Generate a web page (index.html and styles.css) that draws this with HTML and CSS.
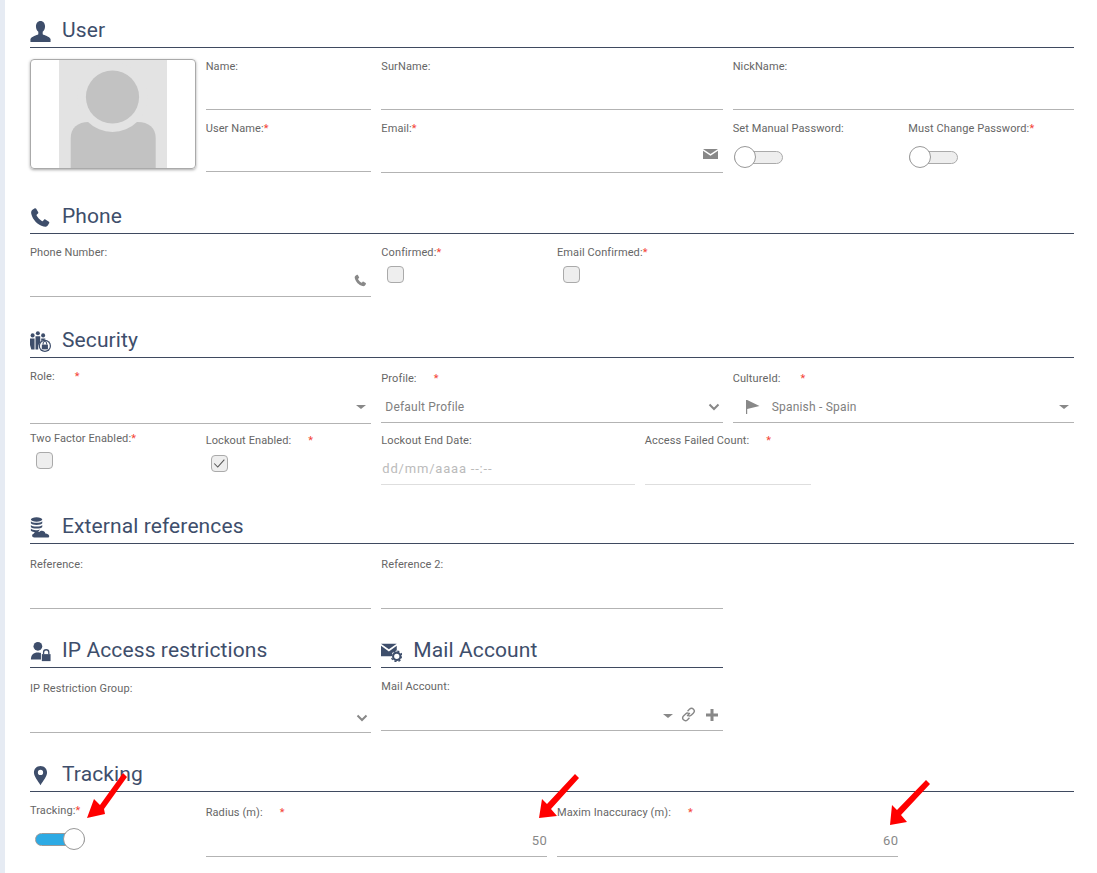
FILE: index.html
```html
<!DOCTYPE html>
<html lang="en">
<head>
    <meta charset="UTF-8">
    <title>User</title>
    <link rel="stylesheet" href="styles.css">
</head>
<body>
<div class="page">

    <!-- User -->
    <section class="section section-first">
        <h2 class="section-head">
            <svg class="head-icon" viewBox="0 0 24 24"><path d="M12 0C9 0 6.800 2.500 6.800 6c0 2.700 1 4.800 2.700 6.300V15C8 16.200 1.500 17.500.5 20.500V24h23v-3.500c-1-3-7.500-4.300-9-5.500v-2.700C16.200 10.800 17.200 8.700 17.200 6 17.200 2.500 15 0 12 0z"/></svg>
            User
        </h2>
        <div class="form-grid">
            <div class="avatar span-2">
                <svg class="avatar-img" viewBox="0 0 108 108">
                    <rect width="108" height="108" fill="#e3e3e3"/>
                    <path d="M11.700 108V78c0-10 7-16 18-16h49c11 0 18 6 18 16v30z" fill="#c2c2c2"/>
                    <circle cx="53.500" cy="37" r="35" fill="#e3e3e3"/>
                    <circle cx="53.500" cy="37" r="26.600" fill="#c2c2c2"/>
                </svg>
            </div>
            <div class="field span-2">
                <label>Name:</label>
                <div class="control"><input type="text"></div>
            </div>
            <div class="field span-4">
                <label>SurName:</label>
                <div class="control"><input type="text"></div>
            </div>
            <div class="field span-4">
                <label>NickName:</label>
                <div class="control"><input type="text"></div>
            </div>
            <div class="field span-2">
                <label>User Name:<span class="req">*</span></label>
                <div class="control"><input type="text"></div>
            </div>
            <div class="field span-4">
                <label>Email:<span class="req">*</span></label>
                <div class="control control-icon">
                    <input type="text">
                    <svg class="mini-icon icon-mail" viewBox="0 0 15 10"><path d="M0 0h15L7.500 5zM0 1.800l7.500 5 7.500-5V10H0z"/></svg>
                </div>
            </div>
            <div class="field span-2">
                <label>Set Manual Password:</label>
                <span class="switch"><span class="knob"></span></span>
            </div>
            <div class="field span-2">
                <label>Must Change Password:<span class="req">*</span></label>
                <span class="switch"><span class="knob"></span></span>
            </div>
        </div>
    </section>

    <!-- Phone -->
    <section class="section section-wide">
        <h2 class="section-head">
            <svg class="head-icon" viewBox="0 0 24 24"><path d="M5.500 1.500 2.800 3.200C1.500 4.200 1 6 1.500 8c1.500 6.500 7.500 12.800 14 14.300 2 .4 3.700 0 4.800-1.300l1.700-2.600c.3-.6.1-1.200-.4-1.600l-4-2.600c-.6-.3-1.200-.2-1.600.3l-1.500 1.700c-2.500-.8-6.300-4.800-7.200-7.200l1.800-1.500c.5-.4.6-1 .3-1.600L7.100 1.900c-.4-.5-1-.7-1.600-.4z"/></svg>
            Phone
        </h2>
        <div class="form-grid">
            <div class="field span-4">
                <label>Phone Number:</label>
                <div class="control control-icon">
                    <input type="text">
                    <svg class="mini-icon icon-phone" viewBox="0 0 24 24"><path d="M5.500 1.500 2.800 3.200C1.500 4.200 1 6 1.500 8c1.500 6.500 7.500 12.800 14 14.300 2 .4 3.700 0 4.800-1.300l1.700-2.600c.3-.6.1-1.200-.4-1.600l-4-2.600c-.6-.3-1.200-.2-1.600.3l-1.500 1.700c-2.500-.8-6.300-4.800-7.200-7.200l1.800-1.500c.5-.4.6-1 .3-1.600L7.100 1.900c-.4-.5-1-.7-1.600-.4z"/></svg>
                </div>
            </div>
            <div class="field span-2">
                <label>Confirmed:<span class="req">*</span></label>
                <span class="check"></span>
            </div>
            <div class="field span-2">
                <label>Email Confirmed:<span class="req">*</span></label>
                <span class="check"></span>
            </div>
        </div>
    </section>

    <!-- Security -->
    <section class="section section-wide">
        <h2 class="section-head">
            <svg class="head-icon" viewBox="0 0 24 24">
                <circle cx="3" cy="5" r="2.300"/>
                <circle cx="9" cy="2.600" r="2.300"/>
                <circle cx="15" cy="5" r="2.300"/>
                <path d="M0 8.500h5.200V21H1.500L0 16zM6.300 6h5.400v7.500c-1.400 1-2.200 2.600-2.300 4.500v3H6.300zM12.800 8.500h4.700V10c-1.800 0-3.400.6-4.700 1.700z"/>
                <circle cx="17" cy="17" r="7"/>
                <circle cx="17" cy="17" r="5.600" fill="#fff"/>
                <path d="M13.500 15.500h7V21h-7z"/>
                <path d="M15 15.500V14c0-2.600 4-2.600 4 0v1.500" fill="none" stroke="#3e4e6b" stroke-width="1.200"/>
            </svg>
            Security
        </h2>
        <div class="form-grid form-grid-tight">
            <div class="field field-tall span-4">
                <label>Role:<span class="req req-wide">*</span></label>
                <div class="control control-select">
                    <span class="select-text"></span>
                    <span class="caret"></span>
                </div>
            </div>
            <div class="field field-low span-4">
                <label>Profile:<span class="req req-gap">*</span></label>
                <div class="control control-select">
                    <span class="select-text">Default Profile</span>
                    <svg class="chevron" viewBox="0 0 12 8"><path d="M1.500 1.500 6 6l4.500-4.500"/></svg>
                </div>
            </div>
            <div class="field field-low span-4">
                <label>CultureId:<span class="req req-wide">*</span></label>
                <div class="control control-select">
                    <svg class="flag" viewBox="0 0 14 14"><path d="M0 0h1.200l12.300 6L1.200 9v5H0z"/></svg>
                    <span class="select-text">Spanish - Spain</span>
                    <span class="caret"></span>
                </div>
            </div>
            <div class="field span-2">
                <label>Two Factor Enabled:<span class="req">*</span></label>
                <span class="check"></span>
            </div>
            <div class="field field-low span-2">
                <label>Lockout Enabled:<span class="req req-gap">*</span></label>
                <span class="check">
                    <svg viewBox="0 0 17 17"><path d="M2.500 8.500 6.500 12.500 14 4"/></svg>
                </span>
            </div>
            <div class="field field-low field-off span-3">
                <label>Lockout End Date:</label>
                <div class="control"><input type="text" placeholder="dd/mm/aaaa --:--"></div>
            </div>
            <div class="field field-low field-off span-2">
                <label>Access Failed Count:<span class="req req-gap">*</span></label>
                <div class="control"><input type="text"></div>
            </div>
        </div>
    </section>

    <!-- External references -->
    <section class="section">
        <h2 class="section-head">
            <svg class="head-icon" viewBox="0 0 24 24">
                <ellipse cx="7.500" cy="2.800" rx="6.500" ry="2.500"/>
                <path d="M1 4.800c1.500 2.400 11.500 2.400 13 0v2.400c-1.500 2.400-11.500 2.400-13 0zM1 9c1.500 2.400 11.500 2.400 13 0v2.400c-1.500 2.400-11.500 2.400-13 0zM1 13.200c1.500 2.400 8 2.400 10.500 1L9 17c-3 .6-6.800 0-8-1.400z"/>
                <path d="M5 23.500c-3 0-3.500-3.800-.8-4.300.7-2.700 4.300-3.600 6.300-2.200 2-2.500 6.800-1.500 7 1.800 4-.4 6.500 4.700 2.500 4.700z"/>
            </svg>
            External references
        </h2>
        <div class="form-grid form-grid-low">
            <div class="field span-4">
                <label>Reference:</label>
                <div class="control control-icon"><input type="text"></div>
            </div>
            <div class="field span-4">
                <label>Reference 2:</label>
                <div class="control control-icon"><input type="text"></div>
            </div>
        </div>
    </section>

    <!-- IP Access restrictions / Mail Account -->
    <div class="section-pair">
        <section class="section span-4">
            <h2 class="section-head">
                <svg class="head-icon" viewBox="0 0 24 24">
                    <circle cx="9" cy="6" r="5"/>
                    <path d="M1 21c0-5 3-8 8-8 1.500 0 2.500.2 3.500.8V21z"/>
                    <path d="M13.500 15h10v8h-10z"/>
                    <path d="M15.500 15v-2c0-4 6-4 6 0v2" fill="none" stroke="#3e4e6b" stroke-width="1.500"/>
                </svg>
                IP Access restrictions
            </h2>
            <div class="form-grid form-grid-low">
                <div class="field span-12">
                    <label>IP Restriction Group:</label>
                    <div class="control control-select">
                        <span class="select-text"></span>
                        <svg class="chevron" viewBox="0 0 12 8"><path d="M1.500 1.500 6 6l4.500-4.500"/></svg>
                    </div>
                </div>
            </div>
        </section>
        <section class="section span-4">
            <h2 class="section-head">
                <svg class="head-icon" viewBox="0 0 24 24">
                    <path d="M0 3h18L9 9.500zM0 5.500l9 6.500 9-6.500v5.300a7 7 0 0 0-6 6.700H0z"/>
                    <circle cx="18" cy="17.500" r="4.200" fill="none" stroke="#3e4e6b" stroke-width="2.400"/>
                    <circle cx="18" cy="17.500" r="6" fill="none" stroke="#3e4e6b" stroke-width="1.600" stroke-dasharray="2.400 2.300"/>
                </svg>
                Mail Account
            </h2>
            <div class="form-grid">
                <div class="field span-12">
                    <label>Mail Account:</label>
                    <div class="control control-select">
                        <span class="select-text"></span>
                        <span class="caret caret-mail"></span>
                        <svg class="link" viewBox="0 0 16 16"><path d="M6.500 9.500 9.500 6.500M7 4.500l2-2c1.500-1.500 3-1.500 4.300-.2s1.300 2.800-.2 4.300l-2 2c-1 1-2.400 1.200-3.400.5M9 11.500l-2 2c-1.500 1.500-3 1.500-4.300.2s-1.300-2.800.2-4.300l2-2c1-1 2.400-1.200 3.400-.5"/></svg>
                        <svg class="plus" viewBox="0 0 12 12"><path d="M4.500 0h3v4.500H12v3H7.500V12h-3V7.500H0v-3h4.500z"/></svg>
                    </div>
                </div>
            </div>
        </section>
    </div>

    <!-- Tracking -->
    <section class="section">
        <h2 class="section-head">
            <svg class="head-icon" viewBox="0 0 24 24"><path fill-rule="evenodd" d="M12 1c-4.400 0-7.500 3.300-7.500 7.500C4.500 13 9 18 12 23c3-5 7.500-10 7.500-14.500C19.500 4.300 16.400 1 12 1zm0 4.500a3 3 0 1 1 0 6 3 3 0 0 1 0-6z"/></svg>
            Tracking
        </h2>
        <div class="form-grid">
            <div class="field span-2">
                <label>Tracking:<span class="req">*</span></label>
                <span class="switch switch-on"><span class="knob"></span></span>
            </div>
            <div class="field field-low span-4">
                <label>Radius (m):<span class="req req-gap">*</span></label>
                <div class="control control-number"><input type="text" value="50"></div>
            </div>
            <div class="field field-low span-4">
                <label>Maxim Inaccuracy (m):<span class="req req-gap">*</span></label>
                <div class="control control-number"><input type="text" value="60"></div>
            </div>
        </div>
    </section>

    <!-- Red arrows drawn over the form -->
    <svg class="arrows" viewBox="0 0 1097 873">
        <path d="M87 818 94 799 100 805 123 773 127 777 104 809 105 814z"/>
        <path d="M539 818 542 799 547 804 575 774 579 778 551 809 557 816z"/>
        <path d="M890 825 892 805 897 810 926 780 930 784 901 815 907 822z"/>
    </svg>
</div>
</body>
</html>
```

FILE: styles.css
```css
/* Page */
html, body {
    margin: 0;
    height: 100%;
    overflow: hidden;
    background-color: #fff;
}

.page {
    position: relative;
    box-sizing: border-box;
    height: 873px;
    padding: 12px 23px 0 25px;
    border-left: 5px solid #e6ebf3;
    font-family: Roboto, "Liberation Sans", sans-serif;
    color: #666;
}

/* Sections */
.section {
    margin-top: 23px;
}

.section-first {
    margin-top: 0;
}

.section-wide {
    margin-top: 25px;
}

.section-pair {
    display: grid;
    grid-template-columns: repeat(12, 1fr);
    column-gap: 10px;
}

.section-head {
    display: flex;
    align-items: center;
    box-sizing: border-box;
    height: 36px;
    margin: 0;
    padding-top: 1px;
    border-bottom: 1px solid #3f4a60;
    font-size: 21px;
    font-weight: 400;
    letter-spacing: 0.1px;
    color: #3e4e6b;
}

.head-icon {
    flex: none;
    width: 21px;
    height: 21px;
    margin-right: 11px;
    margin-top: 3px;
    fill: #3e4e6b;
}

/* 12 column form grid */
.form-grid {
    display: grid;
    grid-template-columns: repeat(12, 1fr);
    gap: 11px 10px;
    margin-top: 11px;
}

.form-grid-tight {
    row-gap: 7px;
}

.form-grid-low {
    margin-top: 13px;
}

.span-2 { grid-column: span 2; }
.span-3 { grid-column: span 3; }
.span-4 { grid-column: span 4; }
.span-12 { grid-column: span 12; }

/* Fields */
.field {
    display: flex;
    flex-direction: column;
    min-width: 0;
}

.field label {
    height: 14px;
    font-size: 11px;
    line-height: 16px;
    letter-spacing: 0.1px;
    white-space: nowrap;
}

.field-low {
    padding-top: 2px;
}

.req {
    color: #f44336;
}

.req-gap {
    margin-left: 17px;
}

.req-wide {
    margin-left: 20px;
}

.control {
    display: flex;
    align-items: center;
    box-sizing: border-box;
    height: 37px;
    border-bottom: 1px solid #b3b3b3;
}

.control-icon,
.control-number {
    height: 38px;
}

.control-select {
    height: 38px;
    padding-top: 8px;
}

.field-tall .control-select {
    height: 41px;
}

.field-low .control-select {
    height: 38px;
    padding-top: 6px;
}

.field-off .control {
    height: 38px;
    padding-top: 5px;
    border-bottom-color: #dedede;
}

.control input {
    flex: 1;
    width: 100%;
    min-width: 0;
    padding: 0;
    border: none;
    outline: none;
    background: none;
    font-family: inherit;
    font-size: 12px;
    letter-spacing: 0.3px;
    color: #888;
}

.control input::placeholder {
    color: #bbb;
}

.field-off input {
    margin-left: 1px;
    font-size: 13px;
    letter-spacing: 0.8px;
}

.control-number input {
    padding-top: 6px;
    text-align: right;
    font-size: 13px;
}

.select-text {
    flex: 1;
    padding-left: 4px;
    font-size: 12px;
    letter-spacing: 0.2px;
    color: #808080;
}

/* Small icons inside the inputs */
.mini-icon {
    flex: none;
    fill: #888;
}

.icon-mail {
    width: 15px;
    height: 10px;
    margin-right: 5px;
    margin-top: 1px;
}

.icon-phone {
    width: 13px;
    height: 13px;
    margin-right: 4px;
    margin-top: 6px;
}

.caret {
    flex: none;
    width: 0;
    height: 0;
    margin-right: 5px;
    border-top: 4px solid #888;
    border-left: 5px solid transparent;
    border-right: 5px solid transparent;
}

.caret-mail {
    margin-right: 8px;
}

.chevron {
    flex: none;
    width: 12px;
    height: 8px;
    margin-right: 3px;
    fill: none;
    stroke: #888;
    stroke-width: 2;
}

.flag {
    flex: none;
    width: 14px;
    height: 14px;
    margin-left: 13px;
    margin-right: 8px;
    fill: #888;
}

.link {
    flex: none;
    width: 15px;
    height: 15px;
    margin-right: 10px;
    margin-top: -2px;
    fill: none;
    stroke: #888;
    stroke-width: 1.500;
}

.plus {
    flex: none;
    width: 12px;
    height: 12px;
    margin-right: 5px;
    margin-top: -2px;
    fill: #888;
}

/* Checkbox */
.check {
    display: block;
    box-sizing: border-box;
    width: 17px;
    height: 17px;
    margin: 7px 0 0 6px;
    border: 1px solid #aaa;
    border-radius: 4px;
    background-color: #eee;
}

.field-low .check {
    margin: 8px 0 0 5px;
}

.check svg {
    display: block;
    width: 15px;
    height: 15px;
    fill: none;
    stroke: #555;
    stroke-width: 1.200;
}

/* Toggle switch */
.switch {
    position: relative;
    display: block;
    box-sizing: border-box;
    width: 49px;
    height: 13px;
    margin: 16px 0 0 1px;
    border: 1px solid #aaa;
    border-radius: 7px;
    background-color: #eee;
}

.knob {
    position: absolute;
    top: -6px;
    left: -1px;
    box-sizing: border-box;
    width: 22px;
    height: 22px;
    border: 1px solid #999;
    border-radius: 50%;
    background-color: #fff;
}

.switch-on {
    width: 50px;
    margin-left: 5px;
    border-color: #999;
    background: linear-gradient(to right, #2daae4 60%, #fff 60%);
}

.switch-on .knob {
    left: auto;
    right: -1px;
}

/* Avatar */
.avatar {
    grid-row: span 2;
    align-self: start;
    display: flex;
    justify-content: center;
    box-sizing: border-box;
    height: 110px;
    border: 1px solid #aaa;
    border-radius: 4px;
    box-shadow: 0 1px 3px rgba(0, 0, 0, 0.35);
    overflow: hidden;
}

.avatar-img {
    display: block;
    width: 108px;
    height: 108px;
}

/* Arrows */
.arrows {
    position: absolute;
    top: 0;
    left: -5px;
    width: 1097px;
    height: 873px;
    pointer-events: none;
    fill: #f00;
}
```
